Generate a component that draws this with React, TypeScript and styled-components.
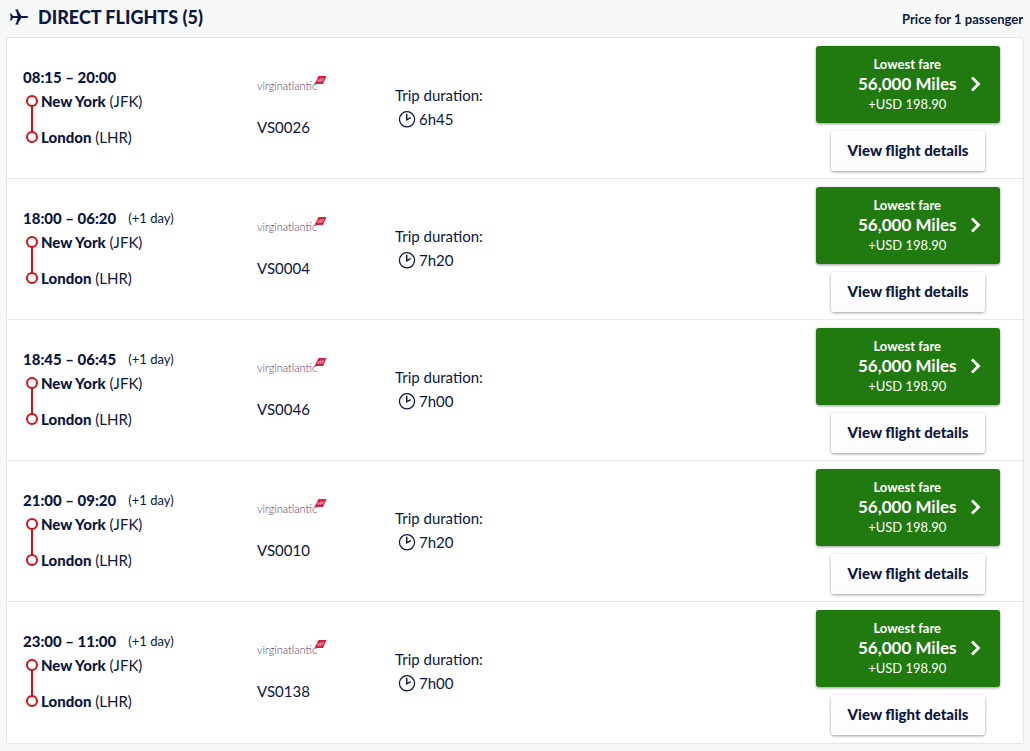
import React from 'react';
import styled, { createGlobalStyle } from 'styled-components';

const GlobalStyle = createGlobalStyle`
  * { box-sizing: border-box; }
  body {
    margin: 0;
    background: #f7f9f9;
    color: #0b1741;
    font-family: Lato, "Open Sans", sans-serif;
    font-size: 15px;
    line-height: 24px;
  }
`;

const Page = styled.main`
  padding: 0 6px 7px;
`;

const Header = styled.header`
  display: flex;
  align-items: center;
  justify-content: space-between;
  height: 37px;
  padding: 0 1px 4px 3px;
`;

const Title = styled.h1`
  display: flex;
  align-items: center;
  gap: 9px;
  margin: 0;
  font-size: 18px;
  font-weight: 900;
`;

const PriceNote = styled.p`
  margin: 0;
  padding-top: 4px;
  font-size: 13px;
  font-weight: 700;
`;

const FlightList = styled.ul`
  margin: 0;
  padding: 0;
  list-style: none;
  background: #fff;
  border: 1px solid #e3e6e6;
  border-radius: 2px;
`;

const FlightRow = styled.li`
  display: grid;
  grid-template-columns: 234px 138px 1fr 184px;
  padding: 8px 23px 7px 16px;

  & + & {
    border-top: 1px solid #e6e8e8;
  }

  &:last-child {
    padding-bottom: 8px;
  }
`;

const Itinerary = styled.div`
  padding-top: 19px;
`;

const Times = styled.div`
  display: flex;
  gap: 12px;
  font-size: 15px;
  font-weight: 900;
`;

const DayOffset = styled.span`
  font-size: 13px;
  font-weight: 400;
`;

const Route = styled.div`
  display: flex;
  gap: 3px;
  padding-left: 3px;
`;

const Stops = styled.div`
  display: grid;
  gap: 12px;
`;

const Stop = styled.span`
  font-size: 15px;
`;

const City = styled.b`
  font-weight: 900;
`;

const Carrier = styled.div`
  display: grid;
  align-content: start;
  gap: 20px;
  padding-top: 29px;
`;

const Duration = styled.div`
  padding-top: 37px;
`;

const DurationValue = styled.div`
  display: flex;
  align-items: center;
  gap: 3px;
  padding-left: 3px;
`;

const Actions = styled.div`
  display: flex;
  flex-direction: column;
  align-items: center;
  gap: 8px;
`;

const FareButton = styled.button`
  display: grid;
  grid-template-columns: 1fr 12px;
  align-items: center;
  gap: 15px;
  width: 100%;
  padding: 8px 19px 9px 42px;
  border: 0;
  border-radius: 3px;
  background: #217a10;
  box-shadow: 0 1px 3px rgba(0, 0, 0, 0.4);
  color: #fff;
  font: inherit;
  line-height: 20px;
  text-align: center;
  white-space: nowrap;
  cursor: pointer;
`;

const FareText = styled.span`
  display: grid;
  justify-items: center;
`;

const FareLabel = styled.span`
  font-size: 13px;
  font-weight: 700;
`;

const Miles = styled.span`
  justify-self: start;
  font-size: 17px;
  font-weight: 700;
`;

const Tax = styled.span`
  font-size: 13px;
`;

const DetailsButton = styled.button`
  height: 40px;
  width: 154px;
  padding: 0 0 2px;
  border: 0;
  border-radius: 3px;
  background: linear-gradient(#fff, #fcfcff);
  box-shadow: 0 1px 3px rgba(0, 0, 0, 0.4);
  color: #0b1741;
  font: inherit;
  font-weight: 900;
  white-space: nowrap;
  cursor: pointer;
`;

const PlaneIcon = () => (
  <svg width="20" height="16" viewBox="0 0 20 16" fill="#0b1741" aria-hidden="true">
    <path d="M1 4.5h1.2l1.8 2.5h4.7L6.8 1h1.7L12.4 7h4.4c1.4 0 2.6.5 2.6 1s-1.2 1-2.6 1h-4.4l-3.9 6H6.8l1.9-6H4l-1.8 2.5H1L1.8 8z" />
    <path d="M6.4 1h3.2M6.4 15h3.2" stroke="#0b1741" />
  </svg>
);

const RouteLine = () => (
  <svg width="12" height="60" viewBox="0 0 12 60" fill="#fff" stroke="#d50f12" strokeWidth="2" aria-hidden="true">
    <path d="M6 17v26" />
    <circle cx="6" cy="12" r="5" />
    <circle cx="6" cy="48" r="5" />
  </svg>
);

const ClockIcon = () => (
  <svg width="18" height="18" viewBox="0 0 18 18" fill="none" stroke="#0b1741" strokeWidth="1.3" aria-hidden="true">
    <circle cx="9" cy="9.3" r="7.6" />
    <path d="M8.7 3.8v6l4-2.2" strokeWidth="1.5" />
  </svg>
);

const Chevron = () => (
  <svg width="12" height="16" viewBox="0 0 12 16" fill="none" stroke="#fff" strokeWidth="2.8" aria-hidden="true">
    <path d="M1 1.5L7.5 8 1 14.5" />
  </svg>
);

const CarrierLogo = () => (
  <svg width="70" height="20" viewBox="0 0 70 20" role="img" aria-label="Virgin Atlantic">
    <text x="0" y="15" fill="#5b3263" fontFamily="Lato, sans-serif" fontSize="11" fontWeight="300">
      virginatlantic
    </text>
    <path d="M61.5 1H69.5l-3.5 8H57.5z" fill="#d91f40" />
    <path d="M60.5 4.5l1 2.2 2-3.2M64.3 3.8l-1 3M65 4h2M64.6 5.6h1.6" fill="none" stroke="#fff" strokeWidth=".6" />
  </svg>
);

type Flight = {
  times: string;
  nextDay?: boolean;
  code: string;
  duration: string;
};

const flights: Flight[] = [
  { times: '08:15 – 20:00', code: 'VS0026', duration: '6h45' },
  { times: '18:00 – 06:20', nextDay: true, code: 'VS0004', duration: '7h20' },
  { times: '18:45 – 06:45', nextDay: true, code: 'VS0046', duration: '7h00' },
  { times: '21:00 – 09:20', nextDay: true, code: 'VS0010', duration: '7h20' },
  { times: '23:00 – 11:00', nextDay: true, code: 'VS0138', duration: '7h00' },
];

export default function App() {
  return (
    <>
      <GlobalStyle />
      <Page>
        <Header>
          <Title>
            <PlaneIcon />
            DIRECT FLIGHTS ({flights.length})
          </Title>
          <PriceNote>Price for 1 passenger</PriceNote>
        </Header>
        <FlightList>
          {flights.map((flight) => (
            <FlightRow key={flight.code}>
              <Itinerary>
                <Times>
                  {flight.times}
                  {flight.nextDay && <DayOffset>(+1 day)</DayOffset>}
                </Times>
                <Route>
                  <RouteLine />
                  <Stops>
                    <Stop><City>New York</City> (JFK)</Stop>
                    <Stop><City>London</City> (LHR)</Stop>
                  </Stops>
                </Route>
              </Itinerary>
              <Carrier>
                <CarrierLogo />
                <span>{flight.code}</span>
              </Carrier>
              <Duration>
                Trip duration:
                <DurationValue>
                  <ClockIcon />
                  {flight.duration}
                </DurationValue>
              </Duration>
              <Actions>
                <FareButton type="button">
                  <FareText>
                    <FareLabel>Lowest fare</FareLabel>
                    <Miles>56,000 Miles</Miles>
                    <Tax>+USD 198.90</Tax>
                  </FareText>
                  <Chevron />
                </FareButton>
                <DetailsButton type="button">View flight details</DetailsButton>
              </Actions>
            </FlightRow>
          ))}
        </FlightList>
      </Page>
    </>
  );
}
